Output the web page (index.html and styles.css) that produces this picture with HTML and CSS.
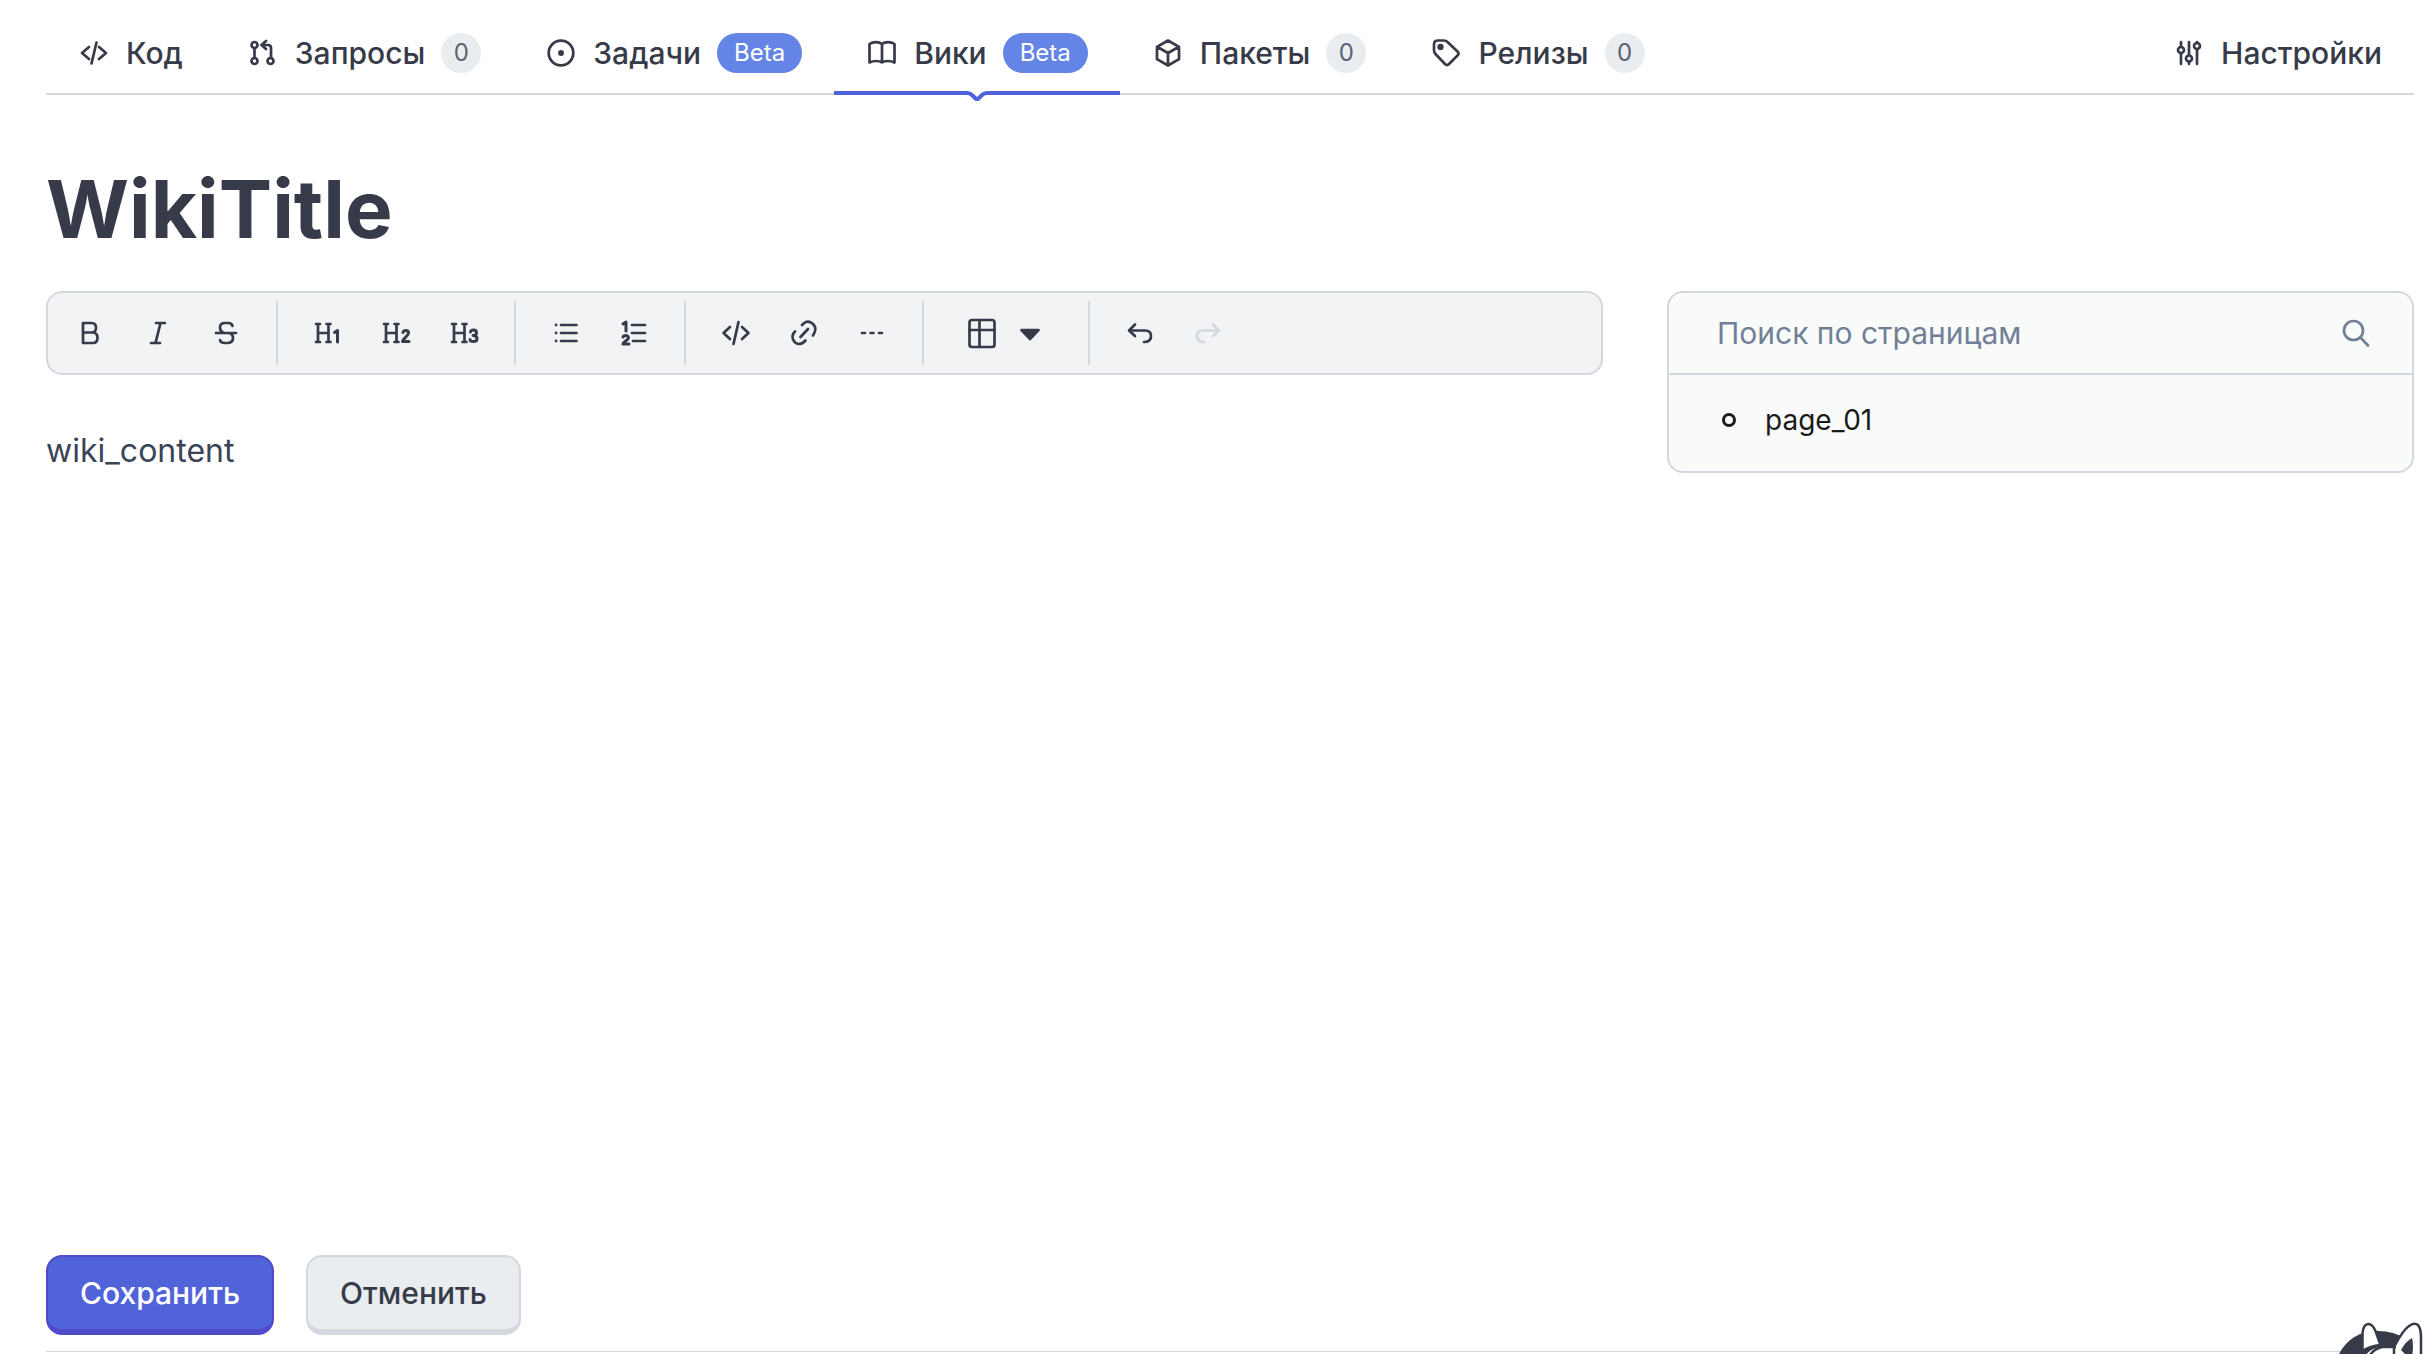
FILE: index.html
```html
<!DOCTYPE html>
<html lang="ru">
<head>
<meta charset="utf-8">
<meta name="viewport" content="width=device-width, initial-scale=1">
<title>Вики</title>
<link rel="stylesheet" href="styles.css">
</head>
<body>
<div class="page">
  <nav class="tabs">
    <a class="tab" href="#code">
      <svg class="icon" viewBox="0 0 32 32"><path d="M11 10l-7 6 7 6M21 10l7 6-7 6M18.500 5.500l-5 21"/></svg>
      <span>Код</span>
    </a>
    <a class="tab" href="#pulls">
      <svg class="icon" viewBox="0 0 32 32"><circle cx="7.500" cy="8" r="3"/><circle cx="7.500" cy="24" r="3"/><circle cx="23.500" cy="24" r="3"/><path d="M7.500 11v10M24 21V11q0-3-3-3h-6M19 4l-4.500 4 4.500 4"/></svg>
      <span>Запросы</span>
      <span class="count">0</span>
    </a>
    <a class="tab" href="#issues">
      <svg class="icon" viewBox="0 0 32 32"><circle cx="16" cy="16" r="12.300"/><circle class="solid" cx="16" cy="16" r="1.600"/></svg>
      <span>Задачи</span>
      <span class="beta">Beta</span>
    </a>
    <a class="tab" href="#wiki" aria-current="page">
      <svg class="icon" viewBox="0 0 32 32"><path d="M16 7C13 4.500 7 4.500 3.500 7v18.500c4-2 9.500-2 12.500 0 3-2 8.500-2 12.500 0V7c-3.500-2.500-9.500-2.500-12.500 0zM16 7v18.500"/></svg>
      <span>Вики</span>
      <span class="beta">Beta</span>
      <span class="marker">
        <svg class="marker-notch" viewBox="0 0 24 10"><path d="M0 2h2q3 0 5 2l3 3q2 2 4 0l3-3q2-2 5-2h2"/></svg>
      </span>
    </a>
    <a class="tab" href="#packages">
      <svg class="icon" viewBox="0 0 32 32"><path d="M16 3.500L27 9.800v12.400L16 28.500 5 22.200V9.800zM5 9.800L16 16l11-6.200M16 16v12.500"/></svg>
      <span>Пакеты</span>
      <span class="count">0</span>
    </a>
    <a class="tab" href="#releases">
      <svg class="icon" viewBox="0 0 32 32"><path d="M4 7.500q0-4 4-4h6q2 0 3.500 1.500L27.500 14.500q2 2 0 4L19 27q-2 2-4 0L5.500 17Q4 15.500 4 13z"/><circle class="solid" cx="10.500" cy="10" r="1.800"/></svg>
      <span>Релизы</span>
      <span class="count">0</span>
    </a>
    <a class="tab tab-end" href="#settings">
      <svg class="icon" viewBox="0 0 32 32"><path d="M8 5v5M8 16v11M16 5v13.500M16 24.500v2.500M24 5v1M24 12v15"/><circle cx="8" cy="13" r="3"/><circle cx="16" cy="21.500" r="3"/><circle cx="24" cy="9" r="3"/></svg>
      <span>Настройки</span>
    </a>
  </nav>

  <main class="main">
    <input class="title" type="text" value="WikiTitle" aria-label="Название страницы">
    <div class="columns">
      <section class="editor">
        <div class="toolbar" role="toolbar" aria-label="Форматирование">
          <div class="tools">
            <button class="tool" type="button" aria-label="Жирный"><svg class="icon" viewBox="0 0 32 32"><path d="M9 6h8.500q4.500 0 4.500 4.800T17.500 15.500H9zM9 15.500h9.500q5 0 5 5.200t-5 5.300H9z"/></svg></button>
            <button class="tool" type="button" aria-label="Курсив"><svg class="icon" viewBox="0 0 32 32"><path d="M14 6h9M9 26h9M18.500 6l-5 20"/></svg></button>
            <button class="tool" type="button" aria-label="Зачёркнутый"><svg class="icon" viewBox="0 0 32 32"><path d="M22.500 9q-.5-3-4.500-3h-3q-5 0-5 4.500 0 4 4 5.500M6 16h20M18 16q5 .5 5 5t-5 5h-3q-4.500 0-5-3"/></svg></button>
          </div>
          <div class="tools">
            <button class="tool" type="button" aria-label="Заголовок 1"><svg class="icon" viewBox="0 0 32 32"><path d="M6 7v18M16.500 7v18M6 16h10.500M4 7h4M4 25h4M14.500 7h4M14.500 25h4"/><path class="bold" d="M22.500 15.500l3-2V25"/></svg></button>
            <button class="tool" type="button" aria-label="Заголовок 2"><svg class="icon" viewBox="0 0 32 32"><path d="M6 7v18M16.500 7v18M6 16h10.500M4 7h4M4 25h4M14.500 7h4M14.500 25h4"/><path class="bold" d="M23 15.500q.5-2 3-2t2.500 2.500c0 3-5.500 5-6 8.500h6.500"/></svg></button>
            <button class="tool" type="button" aria-label="Заголовок 3"><svg class="icon" viewBox="0 0 32 32"><path d="M6 7v18M16.500 7v18M6 16h10.500M4 7h4M4 25h4M14.500 7h4M14.500 25h4"/><path class="bold" d="M22.500 15q.5-2 3-2 3 0 3 2.700T25 18.500q4 0 4 3t-3.500 3-3.500-2"/></svg></button>
          </div>
          <div class="tools">
            <button class="tool" type="button" aria-label="Список"><svg class="icon" viewBox="0 0 32 32"><path d="M11 8h15.500M11 16h15.500M11 24h15.500"/><circle class="dot" cx="6" cy="8" r="1.400"/><circle class="dot" cx="6" cy="16" r="1.400"/><circle class="dot" cx="6" cy="24" r="1.400"/></svg></button>
            <button class="tool" type="button" aria-label="Нумерованный список"><svg class="icon" viewBox="0 0 32 32"><path d="M14 8h13M14 16h13M15 24h12"/><path class="bold" d="M5 7l3-2v9M5 20q.5-1.500 2.800-1.500T10.500 21c0 2-5 3.500-5.500 6h6"/></svg></button>
          </div>
          <div class="tools">
            <button class="tool" type="button" aria-label="Код"><svg class="icon" viewBox="0 0 32 32"><path d="M10 10l-6.500 6 6.500 6M22 10l6.500 6-6.500 6M18.500 5l-5 22"/></svg></button>
            <button class="tool" type="button" aria-label="Ссылка"><svg class="icon" viewBox="0 0 32 32"><path d="M12.500 20l7.500-8M14 8l2-1.800q4-3.200 8.500.3 4.500 4 2 9L25 18.500M7 14.500q-3.500 3.500-2 8 2 4 5.500 4.500 4 0 7-3.500"/></svg></button>
            <button class="tool" type="button" aria-label="Разделитель"><svg class="icon" viewBox="0 0 32 32"><path d="M6 16h3M14.500 16h3M23 16h3"/></svg></button>
          </div>
          <div class="tools">
            <button class="tool tool-wide" type="button" aria-label="Таблица"><svg class="icon" viewBox="0 0 32 32"><rect x="3.500" y="3" width="25" height="27" rx="2.500"/><path d="M3.500 13h25M13.500 3v27"/></svg><svg class="icon" viewBox="0 0 32 32"><path class="solid" d="M7.500 13h17L16 22z"/></svg></button>
          </div>
          <div class="tools">
            <button class="tool" type="button" aria-label="Отменить действие"><svg class="icon" viewBox="0 0 32 32"><path d="M11 7.500L5 13.500l6 5.500M5.500 13.500H21q6 0 6 5.500t-6 6h-1"/></svg></button>
            <button class="tool" type="button" aria-label="Повторить действие" disabled><svg class="icon" viewBox="0 0 32 32"><path d="M21 7.500l6 6-6 5.500M26.500 13.500H11q-6 0-6 5.500t6 6h1"/></svg></button>
          </div>
        </div>
        <textarea class="content" aria-label="Содержимое страницы">wiki_content</textarea>
      </section>

      <aside class="pages">
        <label class="search">
          <input class="search-input" type="search" placeholder="Поиск по страницам" aria-label="Поиск по страницам">
          <svg class="icon" viewBox="0 0 32 32"><circle cx="13.500" cy="13.500" r="9.500"/><path d="M20.500 20.500l7.500 8"/></svg>
        </label>
        <ul class="page-list">
          <li><a class="page-link" href="#page_01"><span class="bullet"></span>page_01</a></li>
        </ul>
      </aside>
    </div>
    <div class="actions">
      <button class="button button-primary" type="submit">Сохранить</button>
      <button class="button" type="button">Отменить</button>
    </div>
  </main>
  <footer class="footer"></footer>
</div>
<svg class="mascot" viewBox="0 0 96 32">
  <path class="fur" d="M8 34Q20 9 48 9q16 0 28 8v17z"/>
  <path class="face" d="M35 34q5-8 15-9h16l12 9z"/>
  <path class="ear" d="M32.500 29V11q1-9 6-9 4 0 7 7l5 14q-10 1-18 6z"/>
  <path class="ear" d="M64 25q9-17 15-21 5-4 9-1 3 4 3 12v19H64z"/>
  <path class="fur" d="M71 28q5-9 11-12 2 8 0 18h-5z"/>
  <path class="line" d="M34 33q5-7 12-8.500M40 33q4-6 12-8h14"/>
</svg>
</body>
</html>
```
FILE: styles.css
```css
:root {
  --ink: #373b49;
  --line: #d3d8df;
  --accent: #5062db;
  --muted: #718096;
}

* {
  box-sizing: border-box;
}

body {
  margin: 0;
  background: #fff;
  color: var(--ink);
  font-family: Inter, "Liberation Sans", sans-serif;
  font-size: 30px;
  line-height: 40px;
}

button,
input,
textarea {
  margin: 0;
  padding: 0;
  border: 0;
  outline: 0;
  background: none;
  color: inherit;
  font: inherit;
}

button {
  cursor: pointer;
}

.page {
  display: flex;
  flex-direction: column;
  min-height: 100vh;
  padding: 13px 22px 0 46px;
}

.icon {
  flex: none;
  width: 32px;
  height: 32px;
  fill: none;
  stroke: currentColor;
  stroke-width: 2.7;
  stroke-linecap: round;
  stroke-linejoin: round;
}

.icon .solid {
  fill: currentColor;
}

.icon .dot {
  fill: currentColor;
  stroke: none;
}

.icon .bold {
  stroke-width: 3;
}

/* Repository tabs */
.tabs {
  display: flex;
  border-bottom: 2px solid var(--line);
}

.tab {
  position: relative;
  display: flex;
  align-items: center;
  gap: 16px;
  height: 80px;
  padding: 0 32px;
  color: inherit;
  font-weight: 500;
  text-decoration: none;
}

.tab-end {
  margin-left: auto;
}

.count,
.beta {
  min-width: 40px;
  border-radius: 20px;
  background: #e9edf0;
  color: #5a6175;
  font-size: 24px;
  font-weight: 400;
  text-align: center;
}

.beta {
  padding: 0 17px;
  background: #6485e6;
  color: #fff;
}

.marker {
  position: absolute;
  top: 78px;
  left: 0;
  right: 0;
  display: flex;
}

.marker::before,
.marker::after {
  content: "";
  flex: 1;
  height: 4px;
  background: var(--accent);
}

.marker-notch {
  width: 24px;
  height: 10px;
  background: linear-gradient(#fff, #fff) 0 0 / 100% 4px no-repeat;
  fill: none;
  stroke: var(--accent);
  stroke-width: 4;
}

/* Editor */
.main {
  display: flex;
  flex: 1;
  flex-direction: column;
  padding: 66px 0 16px;
}

.title {
  width: 100%;
  height: 96px;
  font-size: 80px;
  font-weight: 700;
  line-height: 96px;
}

.columns {
  display: grid;
  flex: 1;
  grid-template-columns: 1557fr 747fr;
  align-items: start;
  gap: 64px;
  padding-top: 34px;
}

.editor {
  display: flex;
  flex-direction: column;
  height: 100%;
}

.toolbar {
  display: flex;
  padding: 8px 0;
  border: 2px solid var(--line);
  border-radius: 16px;
  background: #f1f3f5;
}

.tools {
  display: flex;
  padding: 0 16px;
}

.tools:first-child {
  padding-left: 8px;
}

.tools:not(:last-child) {
  border-right: 2px solid var(--line);
}

.tool {
  display: flex;
  align-items: center;
  justify-content: center;
  gap: 16px;
  width: 68px;
  height: 64px;
}

.tool-wide {
  width: 132px;
}

.tool:disabled {
  color: var(--line);
}

.content {
  flex: 1;
  min-height: 240px;
  margin-top: 52px;
  color: #3a4456;
  font-size: 32px;
  line-height: 48px;
  resize: none;
}

/* Page search */
.pages {
  border: 2px solid var(--line);
  border-radius: 16px;
  background: #f9fbfa;
}

.search {
  display: flex;
  align-items: center;
  height: 82px;
  padding: 0 40px 0 48px;
  border-bottom: 2px solid var(--line);
  color: var(--muted);
}

.search-input {
  flex: 1;
  min-width: 0;
}

.search-input::placeholder {
  color: var(--muted);
  opacity: 1;
}

.page-list {
  margin: 0;
  padding: 25px 48px 31px;
  list-style: none;
  color: #1b1b1b;
  font-size: 28px;
}

.page-link {
  display: flex;
  align-items: center;
  gap: 29px;
  color: inherit;
  text-decoration: none;
}

.bullet {
  width: 14px;
  height: 14px;
  margin-left: 5px;
  border: 3px solid currentColor;
  border-radius: 50%;
}

/* Form actions */
.actions {
  display: flex;
  gap: 32px;
}

.button {
  height: 80px;
  padding: 0 32px;
  border: 2px solid var(--line);
  border-bottom-width: 6px;
  border-radius: 16px;
  background: #e9edf0;
  font-weight: 500;
}

.button-primary {
  border-color: #504bc8;
  background: #5163d9;
  color: #fff;
}

.footer {
  height: 3px;
  border-top: 1px solid var(--line);
}

.mascot {
  position: fixed;
  right: 10px;
  bottom: 0;
  width: 96px;
  height: 32px;
  stroke: var(--ink);
  stroke-width: 2.5;
}

.mascot .fur {
  fill: var(--ink);
  stroke: none;
}

.mascot .ear {
  fill: #fff;
}

.mascot .face {
  fill: #fff;
  stroke: none;
}

.mascot .line {
  fill: none;
}
```
